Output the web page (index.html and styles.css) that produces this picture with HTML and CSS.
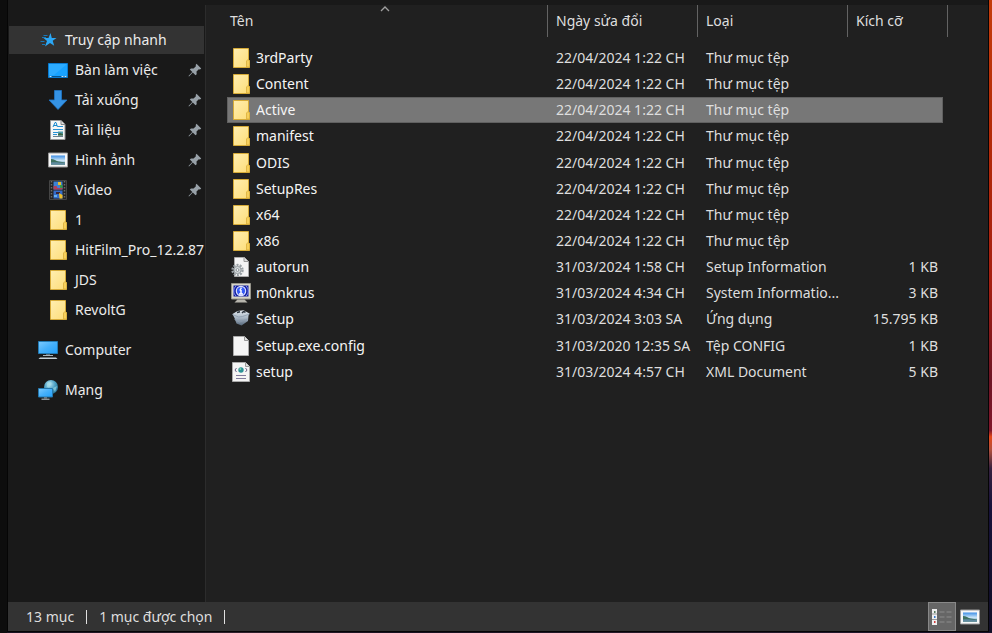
FILE: index.html
```html
<!DOCTYPE html>
<html lang="vi">
<head>
<meta charset="utf-8">
<meta name="viewport" content="width=device-width, initial-scale=1">
<title>Explorer</title>
<link rel="stylesheet" href="styles.css">
</head>
<body>
<svg class="sprite" aria-hidden="true">
  <defs>
    <linearGradient id="g-folder" x1="0" y1="0" x2="1" y2="1"><stop offset="0" stop-color="#ffeeb0"/><stop offset="1" stop-color="#fddd78"/></linearGradient>
    <linearGradient id="g-screen" x1="0" y1="0" x2="1" y2="1"><stop offset="0" stop-color="#7ccbff"/><stop offset=".5" stop-color="#45b0fb"/><stop offset="1" stop-color="#22a0fa"/></linearGradient>
    <linearGradient id="g-sky" x1="0" y1="0" x2="0" y2="1"><stop offset="0" stop-color="#3e8fe6"/><stop offset=".55" stop-color="#c9e4f6"/><stop offset="1" stop-color="#5f93b5"/></linearGradient>
    <radialGradient id="g-globe" cx=".4" cy=".3" r=".8"><stop offset="0" stop-color="#b5e2f3"/><stop offset=".5" stop-color="#4a9fc2"/><stop offset="1" stop-color="#1a6488"/></radialGradient>
    <linearGradient id="g-box" x1="0" y1="0" x2="0" y2="1"><stop offset="0" stop-color="#e3e9ef"/><stop offset=".5" stop-color="#a9b7c5"/><stop offset="1" stop-color="#55677a"/></linearGradient>
  </defs>
  <symbol id="folder" viewBox="0 0 20 20">
    <path d="M2.500 .5h15v12h1v7h-16z" fill="url(#g-folder)" stroke="#d6ab38"/>
    <path d="M15.500 19v-6l1.500-1.500 1.500 1.500v6z" fill="#f6d05c" stroke="#d9ae3c" stroke-width=".8"/>
  </symbol>
  <symbol id="star" viewBox="0 0 20 20">
    <path d="M12.500 3l1.300 5h4.700l-3.800 2.800 1.500 5-4.200-2.800-5 3.500 2-5.500-3.500-3h5z" fill="#2ba7f5"/>
    <path d="M5.500 5.500h4M4 7.500h4M2.500 11.500h4M4 14.500h3" stroke="#1879b8" stroke-width="1"/>
  </symbol>
  <symbol id="desktop" viewBox="0 0 20 20">
    <path d="M.5 3.500h19v14H.5z" fill="#18a2ff" stroke="#087ad0"/>
    <path d="M1 4h18L6 15H1z" fill="#4cb9ff" opacity=".4"/>
    <path d="M1 16.500h18" stroke="#07558f"/><path d="M1.500 16.500h2M13.500 16.500h2M16.500 16.500h2" stroke="#bfe4ff"/>
  </symbol>
  <symbol id="download" viewBox="0 0 20 20"><path d="M6.500 .5h7v9.500h5.500L10 19.500 1 10h5.500z" fill="#3593e5" stroke="#2077c9" stroke-width=".8"/></symbol>
  <symbol id="document" viewBox="0 0 20 20">
    <path d="M2.500 .5h10.500l4 4v15H2.500z" fill="#f6f6f6" stroke="#999"/><path d="M13 .5v4h4" fill="#ddd" stroke="#888"/>
    <path d="M5 7l2-4.500h1l1.500 4.500M6 5.500h3" stroke="#1688cf" fill="none" stroke-width="1"/>
    <path d="M10 6.500h5M5 9.500h10M5 12.500h5M5 14.500h4" stroke="#2a93d5"/><path d="M5 16.500h10" stroke="#6d7f8b"/>
    <path d="M10 11.500h5v4h-5z" fill="#4f9aaa"/><path d="M10 14l2-1 3 1v1.500h-5z" fill="#3d6745"/>
  </symbol>
  <symbol id="picture" viewBox="0 0 20 20">
    <path d="M.5 3h19v14H.5z" fill="#f7f7f7" stroke="#9a9a9a"/><path d="M3 5.500h14v9H3z" fill="url(#g-sky)"/>
    <path d="M3 9c3 0 5 2 8 2.500l6 1v2H3z" fill="#3f7261"/><path d="M3 12.500c5-.5 9 .5 14 .5v1.500H3z" fill="#5f8aa0"/>
  </symbol>
  <symbol id="video" viewBox="0 0 20 20">
    <path d="M1.500 .5h17v19h-17z" fill="#252525" stroke="#454545"/>
    <path d="M3.500 1v18M16.500 1v18" stroke="#6a6a6a" stroke-width="1.500" stroke-dasharray="1.500 1.500"/>
    <path d="M5.500 1.500h9v8h-9z" fill="#3d82d6"/><path d="M5.500 10.500h9v8h-9z" fill="#356dca"/>
    <path d="M5.500 6h3l1 2h5v1.500h-9z" fill="#b0405b"/><path d="M10 2h3v3h-3z" fill="#e9bd29"/><path d="M12 5h2.500v3H12z" fill="#37984b"/>
    <path d="M8 12h4v2H8z" fill="#3a2637"/><path d="M11 13l3.500 2v3.500h-3z" fill="#efc02c"/><path d="M6 15h3v2H6z" fill="#65b2ef"/>
  </symbol>
  <symbol id="computer" viewBox="0 0 20 20">
    <path d="M.5 1.500h19v12H.5z" fill="url(#g-screen)" stroke="#227bb5"/>
    <path d="M8 14h4v2H8z" fill="#596a76"/><path d="M5 15.500h10" stroke="#a9b6be"/><path d="M2 17.500h16l1.500 1.500H.5z" fill="#c3cfd6"/>
  </symbol>
  <symbol id="network" viewBox="0 0 20 20">
    <circle cx="13" cy="7" r="7" fill="url(#g-globe)"/><path d="M9 3c3-3 6 0 4 2s-1 3-4 2zM15 8l4-2-2 6z" fill="#a7dfe8" opacity=".6"/>
    <path d="M.5 8.500h14v8.500H.5z" fill="url(#g-screen)" stroke="#2477ac"/><path d="M6 17h3v1.500H6z" fill="#667985"/><path d="M3.500 19.200h8" stroke="#c1cdd4"/>
  </symbol>
  <symbol id="pin" viewBox="0 0 14 14"><path d="M8.500 .8l4.700 4.700-1.200 1-1.200-.2-2.300 2.300.2 2.600-1.200 1.100-2.700-2.700L1 13.500l-.5-.5 3.800-3.900-2.500-2.500 1.200-1.200 2.600.1 2.300-2.300-.2-1.200z" fill="#98a1a8"/></symbol>
  <symbol id="inf" viewBox="0 0 20 20">
    <path d="M3.500 .5h10l4 4v15h-14z" fill="#f4f4f4" stroke="#aaa"/><path d="M13 .5v4h4" fill="#ddd" stroke="#999"/>
    <circle cx="6.500" cy="13" r="5" fill="none" stroke="#9aa1a5" stroke-width="2.400" stroke-dasharray="2 1.140"/>
    <circle cx="6.500" cy="13" r="3.600" fill="#d4d9db" stroke="#959ca0"/><circle cx="6.500" cy="13" r="1.400" fill="#fff" stroke="#899297"/>
  </symbol>
  <symbol id="sysinfo" viewBox="0 0 20 20">
    <path d="M.5 .5h19v15.500H.5z" fill="#d7d5c7" stroke="#96948a"/><path d="M2.500 2.500h15v11h-15z" fill="#15209a"/>
    <path d="M5 3c-3 3-3 7 0 10M15 3c3 3 3 7 0 10" fill="none" stroke="#8290ff"/>
    <circle cx="10" cy="8" r="4.700" fill="#365bf5" stroke="#d9deff" stroke-width="1.200"/><path d="M10 4.500v1.700M10 7v4M8.500 7h1.500M8 11h4" stroke="#fff" stroke-width="1.500"/>
    <path d="M6.500 16.500h7l3 3h-13z" fill="#b7b5ad"/>
  </symbol>
  <symbol id="installer" viewBox="0 0 20 20">
    <path d="M1.500 5l5-3 6-.7 6 3.200-1 2-.5 5.500-6.500 4.500-5-2-2-5.500z" fill="url(#g-box)"/>
    <path d="M1.500 5.500l6 2.500 4-.5 7-2.500M3.500 10.500l5 2.500 8-3" fill="none" stroke="#8b9bac" stroke-width=".8"/><path d="M6 3.500l3-.8M11 4l1.500-1.500 2 .7" stroke="#29323c" stroke-width="1.500" fill="none"/>
  </symbol>
  <symbol id="file" viewBox="0 0 20 20"><path d="M2.500 .5h11l4 4v15h-15z" fill="#f5f5f5" stroke="#aaa"/><path d="M13.500 .5v4h4" fill="#dedede" stroke="#999"/></symbol>
  <symbol id="xml" viewBox="0 0 20 20">
    <path d="M1.500 .5h13l4 4v15h-17z" fill="#f5f5f5" stroke="#aaa"/><path d="M14.500 .5v4h4" fill="#dedede" stroke="#999"/>
    <path d="M5.500 6L4 8l1.500 2M14.500 6L16 8l-1.500 2" fill="none" stroke="#6e6287"/><circle cx="10" cy="8" r="2.700" fill="#2d9297"/><circle cx="9.300" cy="7" r="1" fill="#7fd1a7"/>
    <path d="M5 13.500h10M5 16.500h10" stroke="#817b9d"/>
  </symbol>
  <symbol id="details" viewBox="0 0 22 20">
    <path d="M1 2h5v16H1z" fill="#eee"/><path d="M1 7h5M1 12.500h5" stroke="#999"/>
    <path d="M3 4h1.500v2H3z" fill="#55795a"/><path d="M3 9h1.500v2H3z" fill="#3477cc"/><path d="M3 14h1.500v2H3z" fill="#d33b3b"/>
    <path d="M8.500 5h5M15.500 5h5M8.500 10h5M15.500 10h5M8.500 15h5M15.500 15h5" stroke="#808080" stroke-width="1.500"/>
  </symbol>
</svg>

<div class="window">
  <nav class="sidebar" aria-label="Điều hướng">
    <ul class="tree">
      <li><a class="place current" href="#"><svg class="icon"><use href="#star"/></svg><span>Truy cập nhanh</span></a>
        <ul class="branch">
          <li><a class="place" href="#"><svg class="icon"><use href="#desktop"/></svg><span>Bàn làm việc</span><svg class="pin"><use href="#pin"/></svg></a></li>
          <li><a class="place" href="#"><svg class="icon"><use href="#download"/></svg><span>Tải xuống</span><svg class="pin"><use href="#pin"/></svg></a></li>
          <li><a class="place" href="#"><svg class="icon"><use href="#document"/></svg><span>Tài liệu</span><svg class="pin"><use href="#pin"/></svg></a></li>
          <li><a class="place" href="#"><svg class="icon"><use href="#picture"/></svg><span>Hình ảnh</span><svg class="pin"><use href="#pin"/></svg></a></li>
          <li><a class="place" href="#"><svg class="icon"><use href="#video"/></svg><span>Video</span><svg class="pin"><use href="#pin"/></svg></a></li>
          <li><a class="place" href="#"><svg class="icon"><use href="#folder"/></svg><span>1</span></a></li>
          <li><a class="place" href="#"><svg class="icon"><use href="#folder"/></svg><span>HitFilm_Pro_12.2.87</span></a></li>
          <li><a class="place" href="#"><svg class="icon"><use href="#folder"/></svg><span>JDS</span></a></li>
          <li><a class="place" href="#"><svg class="icon"><use href="#folder"/></svg><span>RevoltG</span></a></li>
        </ul>
      </li>
      <li><a class="place" href="#"><svg class="icon"><use href="#computer"/></svg><span>Computer</span></a></li>
      <li><a class="place" href="#"><svg class="icon"><use href="#network"/></svg><span>Mạng</span></a></li>
    </ul>
  </nav>

  <main class="content">
    <table class="files">
      <colgroup><col class="col-name"><col class="col-date"><col class="col-type"><col class="col-size"></colgroup>
      <thead>
        <tr>
          <th scope="col" aria-sort="ascending"><button type="button" class="sort">Tên<svg class="chevron" viewBox="0 0 10 6"><path d="M1 5l4-4 4 4" fill="none" stroke="#a0a0a0" stroke-width="1.300"/></svg></button></th>
          <th scope="col"><button type="button" class="sort">Ngày sửa đổi</button></th>
          <th scope="col"><button type="button" class="sort">Loại</button></th>
          <th scope="col"><button type="button" class="sort">Kích cỡ</button></th>
        </tr>
      </thead>
      <tbody>
        <tr><td><span class="name"><svg class="icon"><use href="#folder"/></svg>3rdParty</span></td><td>22/04/2024 1:22 CH</td><td>Thư mục tệp</td><td></td></tr>
        <tr><td><span class="name"><svg class="icon"><use href="#folder"/></svg>Content</span></td><td>22/04/2024 1:22 CH</td><td>Thư mục tệp</td><td></td></tr>
        <tr class="selected"><td><span class="name"><svg class="icon"><use href="#folder"/></svg>Active</span></td><td>22/04/2024 1:22 CH</td><td>Thư mục tệp</td><td></td></tr>
        <tr><td><span class="name"><svg class="icon"><use href="#folder"/></svg>manifest</span></td><td>22/04/2024 1:22 CH</td><td>Thư mục tệp</td><td></td></tr>
        <tr><td><span class="name"><svg class="icon"><use href="#folder"/></svg>ODIS</span></td><td>22/04/2024 1:22 CH</td><td>Thư mục tệp</td><td></td></tr>
        <tr><td><span class="name"><svg class="icon"><use href="#folder"/></svg>SetupRes</span></td><td>22/04/2024 1:22 CH</td><td>Thư mục tệp</td><td></td></tr>
        <tr><td><span class="name"><svg class="icon"><use href="#folder"/></svg>x64</span></td><td>22/04/2024 1:22 CH</td><td>Thư mục tệp</td><td></td></tr>
        <tr><td><span class="name"><svg class="icon"><use href="#folder"/></svg>x86</span></td><td>22/04/2024 1:22 CH</td><td>Thư mục tệp</td><td></td></tr>
        <tr><td><span class="name"><svg class="icon"><use href="#inf"/></svg>autorun</span></td><td>31/03/2024 1:58 CH</td><td>Setup Information</td><td>1 KB</td></tr>
        <tr><td><span class="name"><svg class="icon"><use href="#sysinfo"/></svg>m0nkrus</span></td><td>31/03/2024 4:34 CH</td><td>System Informatio...</td><td>3 KB</td></tr>
        <tr><td><span class="name"><svg class="icon"><use href="#installer"/></svg>Setup</span></td><td>31/03/2024 3:03 SA</td><td>Ứng dụng</td><td>15.795 KB</td></tr>
        <tr><td><span class="name"><svg class="icon"><use href="#file"/></svg>Setup.exe.config</span></td><td>31/03/2020 12:35 SA</td><td>Tệp CONFIG</td><td>1 KB</td></tr>
        <tr><td><span class="name"><svg class="icon"><use href="#xml"/></svg>setup</span></td><td>31/03/2024 4:57 CH</td><td>XML Document</td><td>5 KB</td></tr>
      </tbody>
    </table>
  </main>

  <footer class="status">
    <span class="stat">13 mục</span>
    <span class="stat">1 mục được chọn</span>
    <div class="views">
      <button type="button" class="view active" aria-label="Chi tiết" aria-pressed="true"><svg class="view-icon"><use href="#details"/></svg></button>
      <button type="button" class="view" aria-label="Hình thu nhỏ" aria-pressed="false"><svg class="icon"><use href="#picture"/></svg></button>
    </div>
  </footer>
</div>
</body>
</html>
```
FILE: styles.css
```css
* { box-sizing: border-box; }

body {
  margin: 0;
  min-height: 100vh;
  display: flex;
  padding: 0 3px 1px 7px;
  background:
    linear-gradient(90deg, #0d0d0d 7px, transparent 7px),
    linear-gradient(90deg, #171120, #30202c 25%, #171120 40%, #2a1c2c 70%, #17122a) bottom / 100% 1px no-repeat,
    linear-gradient(#c43d0b, #b42c08 20%, #a52012 45%, #6d1525 60%, #80162a 68%, #e34718 69%, #b3503c 71%, #35213f 74%, #17123a 80%, #100e26);
  font: 14px/18px "Noto Sans", "Open Sans", sans-serif;
  color: #dedede;
}

.sprite { position: absolute; width: 0; height: 0; }

.window {
  flex: 1;
  display: grid;
  grid-template: 1fr 29px / 197px 1fr;
  border: 1px solid #050505;
  border-width: 0 1px 1px;
  background: #191919;
}

.icon { width: 20px; height: 20px; flex: none; }

.sidebar { padding: 25px 0 0 1px; min-width: 0; }
.tree, .branch { margin: 0; padding: 0; list-style: none; }
.tree { display: grid; gap: 10px; }
.place {
  display: flex;
  align-items: center;
  gap: 7px;
  height: 30px;
  margin-right: 3px;
  padding-left: 29px;
  color: #ebebeb;
  text-decoration: none;
  white-space: nowrap;
}
.place.current { background: #333; border: solid #191919; border-width: 1px 0; }
.branch .place { padding-left: 39px; }
.pin { width: 14px; height: 14px; margin-left: auto; margin-right: 2px; flex: none; }

.content {
  margin-top: 5px;
  padding-left: 21px;
  border-left: 1px solid #2c2c2c;
  background: #202020;
}
.files { table-layout: fixed; width: 716px; height: 380px; border-collapse: collapse; }
.col-name { width: 321px; }
.col-date, .col-type { width: 150px; }
.col-size { width: 95px; }
.files th { height: 40px; padding: 0; vertical-align: top; font-weight: 400; }
.files th:last-child .sort { width: 100px; }
.sort {
  position: relative;
  display: block;
  width: 100%;
  height: 32px;
  padding: 0 8px;
  border: 0;
  border-right: 1px solid #636363;
  background: none;
  color: #dedede;
  font: inherit;
  text-align: left;
}
.files th:first-child .sort { padding-left: 3px; }
.chevron { position: absolute; top: 1px; left: 50%; width: 10px; height: 6px; margin-left: -7px; }
.files td { padding: 0 5px 0 8px; white-space: nowrap; }
.files td:first-child { padding-left: 4px; color: #f5f5f5; }
.files td:last-child { text-align: right; }
.name { display: flex; align-items: center; gap: 5px; }
.selected { background: #777; outline: 1px solid #606060; outline-offset: -1px; }

.status {
  grid-column: 1 / -1;
  display: flex;
  align-items: center;
  padding-left: 18px;
  background: #333;
}
.stat { display: flex; align-items: center; gap: 12px; margin-right: 12px; }
.stat::after { content: ""; width: 1px; height: 14px; background: #e0e0e0; }
.views { display: flex; align-self: stretch; margin-left: auto; padding-right: 4px; }
.view {
  display: grid;
  place-items: center;
  width: 28px;
  padding: 0;
  border: 1px solid transparent;
  background: none;
}
.view.active { background: #666; border-color: #888; }
.view-icon { width: 22px; height: 20px; }
```
